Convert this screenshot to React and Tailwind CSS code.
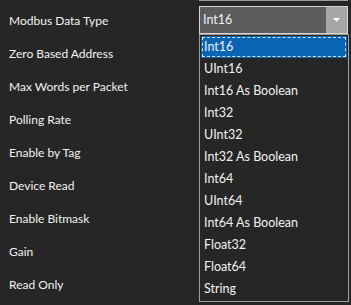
import React from "react";

const labels = [
  "Modbus Data Type",
  "Zero Based Address",
  "Max Words per Packet",
  "Polling Rate",
  "Enable by Tag",
  "Device Read",
  "Enable Bitmask",
  "Gain",
  "Read Only",
];

const options = [
  "Int16",
  "UInt16",
  "Int16 As Boolean",
  "Int32",
  "UInt32",
  "Int32 As Boolean",
  "Int64",
  "UInt64",
  "Int64 As Boolean",
  "Float32",
  "Float64",
  "String",
];

export default function App() {
  return (
    <div
      className="w-[351px] h-[305px] bg-[#262626] text-[#f2f2f2] text-[12px] overflow-hidden flex"
      style={{ fontFamily: '"Segoe UI", Lato, sans-serif' }}
    >
      {/* Labels */}
      <div className="w-[199px] pt-[4px] pl-[9px] flex flex-col">
        {labels.map((l) => (
          <div key={l} className="h-[33px] flex items-center leading-none">
            {l}
          </div>
        ))}
      </div>

      {/* Combo + open list */}
      <div className="relative w-[150px] flex flex-col">
        <div className="h-px w-[149px] bg-[#9c9c9c]" />
        <div className="mt-[5px] h-[28px] w-[149px] border border-[#d4d4d4] bg-[#5c5c5c] flex">
          <div className="flex-1 flex items-center pl-[3px] text-[12.5px]">Int16</div>
          <div className="w-[21px] bg-[#a6a6a6] flex items-center justify-center">
            <svg width="7" height="4" viewBox="0 0 7 4">
              <path d="M0 0 H7 L3.5 4 Z" fill="#ffffff" />
            </svg>
          </div>
        </div>

        <div className="absolute left-0 top-[34px] w-[150px] h-[268px] border border-[#a39f94] bg-[#262626] p-px text-[12.5px]">
          {options.map((o, i) => (
            <div
              key={o}
              className={
                i === 0
                  ? "h-[22px] bg-[#0a64b4] p-px"
                  : "h-[22px] flex items-center pl-[3px]"
              }
            >
              {i === 0 ? (
                <div className="h-full border border-dashed border-[#cfe0f0] flex items-center pl-[1px]">
                  {o}
                </div>
              ) : (
                o
              )}
            </div>
          ))}
        </div>
      </div>
    </div>
  );
}
